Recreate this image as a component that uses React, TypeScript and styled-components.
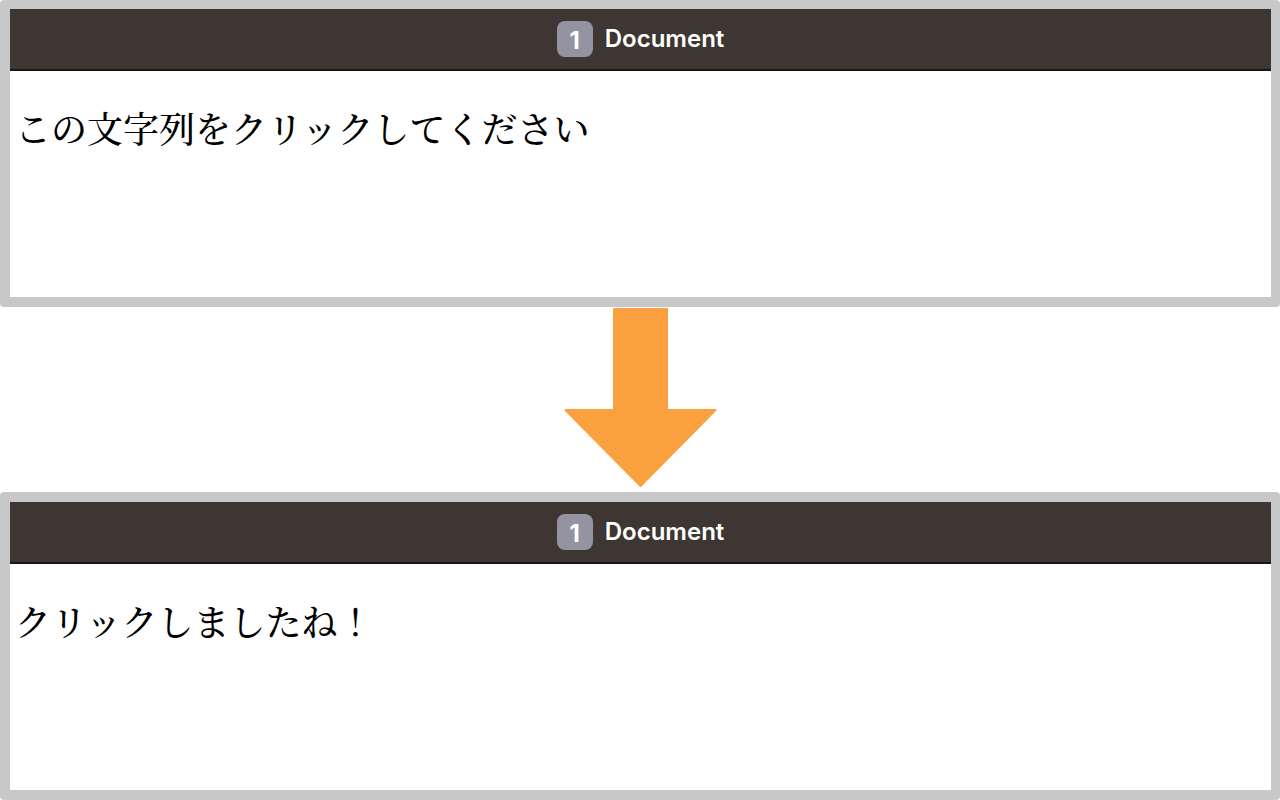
import React from "react";
import styled, { createGlobalStyle } from "styled-components";

const GlobalStyle = createGlobalStyle`
  * { box-sizing: border-box; }
  body { margin: 0; background: #ffffff; }
`;

const Page = styled.main`
  display: flex;
  flex-direction: column;
`;

const Browser = styled.section<{ $topEdge: number }>`
  border: solid #c8c8c8;
  border-width: ${({ $topEdge }) => $topEdge}px 9px 10px 10px;
  border-radius: 4px;
`;

const TitleBar = styled.header`
  display: flex;
  align-items: center;
  justify-content: center;
  gap: 12px;
  height: 62px;
  border-bottom: 2px solid #1b1517;
  background: #3e3633;
  color: #ffffff;
  font-family: Inter, sans-serif;
`;

const Badge = styled.span`
  display: grid;
  place-items: center;
  width: 36px;
  height: 36px;
  padding-top: 3px;
  border-radius: 8px;
  background: #9493a2;
  font-size: 24px;
  font-weight: 700;
  line-height: 24px;
`;

const Title = styled.h1`
  margin: 0;
  font-size: 24px;
  font-weight: 600;
  line-height: 36px;
`;

const Content = styled.div`
  min-height: 226px;
  padding: 31px 5px;
  background: #ffffff;
`;

const Message = styled.p`
  margin: 0;
  color: #000000;
  font-family: "Noto Serif CJK JP", "Noto Serif JP", "Hiragino Mincho ProN", "Noto Sans CJK JP", serif;
  font-size: 36px;
  font-weight: 500;
  line-height: 52px;
`;

const Arrow = styled.svg`
  display: block;
  align-self: center;
  width: 154px;
  height: 185px;
`;

function DocumentWindow({ message, topEdge }: { message: string; topEdge: number }) {
  return (
    <Browser $topEdge={topEdge}>
      <TitleBar>
        <Badge>1</Badge>
        <Title>Document</Title>
      </TitleBar>
      <Content>
        <Message>{message}</Message>
      </Content>
    </Browser>
  );
}

export default function App() {
  return (
    <Page>
      <GlobalStyle />
      <DocumentWindow topEdge={9} message="この文字列をクリックしてください" />
      <Arrow viewBox="0 0 154 185" aria-hidden="true">
        <path
          d="M51 2H104V103H152.500L77.500 179L2.500 103H51Z"
          fill="#faa03e"
          stroke="#faa03e"
          strokeWidth="2"
          strokeLinejoin="round"
        />
      </Arrow>
      <DocumentWindow topEdge={10} message="クリックしましたね！" />
    </Page>
  );
}
